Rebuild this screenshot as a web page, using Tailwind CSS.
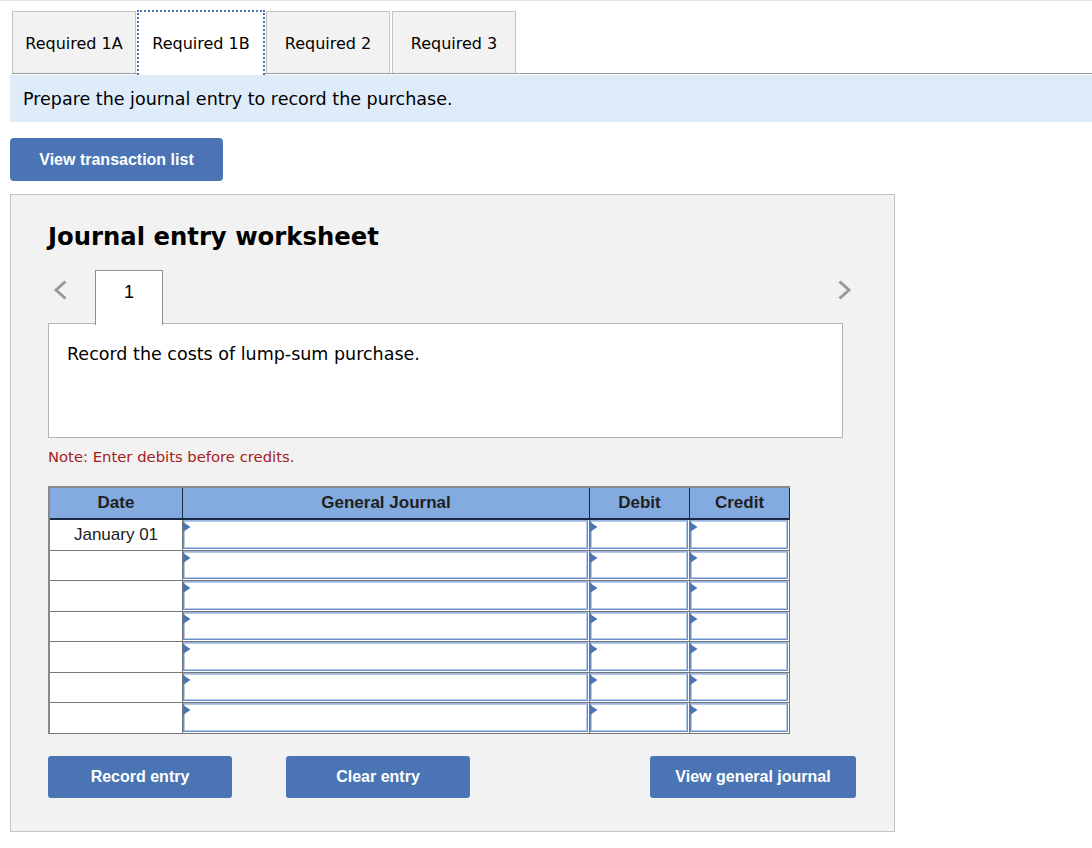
<!DOCTYPE html>
<html lang="en">
<head>
  <meta charset="UTF-8" />
  <title>Journal entry worksheet</title>
  <script src="https://cdn.jsdelivr.net/npm/@tailwindcss/browser@4"></script>
</head>
<body class="bg-white text-black font-['DejaVu_Sans',sans-serif] w-[1092px] h-[848px] overflow-hidden">
  <div class="border-t border-[#e2e2e2] h-[11px]"></div>

  <!-- tabs -->
  <div class="ml-3 flex items-end h-[62px] text-[16px]">
    <div class="w-[124px] h-[62px] bg-[#f2f2f2] border border-b-0 border-[#c4c4c4] flex items-center justify-center pt-[3px]">Required 1A</div>
    <div class="relative z-10 ml-[1px] mb-[-2px] w-[128px] h-[65px] bg-white border-2 border-b-0 border-dotted border-[#4a74b4] flex items-center justify-center">Required 1B</div>
    <div class="ml-[1px] w-[124px] h-[62px] bg-[#f2f2f2] border border-b-0 border-[#c4c4c4] flex items-center justify-center pt-[3px]">Required 2</div>
    <div class="ml-[2px] w-[124px] h-[62px] bg-[#f2f2f2] border border-b-0 border-[#c4c4c4] flex items-center justify-center pt-[3px]">Required 3</div>
  </div>
  <div class="ml-3 border-t border-[#9a9a9a] h-[1px]"></div>

  <div class="ml-[10px] mt-[1px] h-[47px] bg-[#deebf8] flex items-center pl-[13px] pt-[1px] text-[17.5px]">Prepare the journal entry to record the purchase.</div>

  <button class="block ml-[10px] mt-4 w-[213px] h-[43px] rounded-[4px] bg-[#4a74b4] text-white font-['Liberation_Sans',sans-serif] font-bold text-[16px]">View transaction list</button>

  <!-- worksheet panel -->
  <div class="ml-[10px] mt-[13px] w-[885px] h-[638px] bg-[#f2f2f2] border border-[#c4c4c4] pl-[37px]">
    <h1 class="mt-[24px] h-[36px] leading-[36px] text-[24.3px] font-bold">Journal entry worksheet</h1>

    <div class="relative mt-[15px] w-[795px] h-[53px]">
      <svg class="absolute left-[5px] top-[10px]" width="14" height="20" viewBox="0 0 14 20" fill="none"><path d="M12.5 1.5 3 10l9.5 8.5" stroke="#999" stroke-width="3"/></svg>
      <div class="absolute left-[47px] top-0 w-[68px] h-[55px] z-10 bg-white border border-b-0 border-[#8f8f8f] flex items-center justify-center pb-[12px] font-['Liberation_Sans',sans-serif] text-[18px]">1</div>
      <svg class="absolute left-[790px] top-[10px]" width="14" height="20" viewBox="0 0 14 20" fill="none"><path d="M1.5 1.5 11 10l-9.5 8.5" stroke="#999" stroke-width="3"/></svg>
    </div>

    <div class="w-[795px] h-[115px] bg-white border border-[#b5b5b5] pl-[18px] pt-[19px] text-[17.5px] leading-[22px]">Record the costs of lump-sum purchase.</div>

    <p class="mt-[9px] h-5 leading-5 text-[14.8px] text-[#a61c1c]">Note: Enter debits before credits.</p>

    <!-- journal table -->
    <div id="journal" class="mt-[19px] w-[742px] border-l-2 border-t-2 border-[#888] font-['Liberation_Sans',sans-serif]">
      <div class="grid grid-cols-[133px_407px_100px_100px] h-[32px] bg-[#84abe0] border-b-2 border-[#1b2a44] text-[#1f1f1f] font-bold text-[17px] leading-[30px] text-center">
        <div class="border-r border-[#1b2a44]">Date</div>
        <div class="border-r border-[#1b2a44]">General Journal</div>
        <div class="border-r border-[#1b2a44]">Debit</div>
        <div class="border-r border-[#1b2a44]">Credit</div>
      </div>
    </div>

    <div class="mt-[22px] relative w-[808px] h-[42px] flex font-['Liberation_Sans',sans-serif] font-bold text-[16px] text-white">
      <button class="w-[184px] rounded-[3px] bg-[#4a74b4]">Record entry</button>
      <button class="ml-[54px] w-[184px] rounded-[3px] bg-[#4a74b4]">Clear entry</button>
      <button class="ml-[180px] w-[206px] rounded-[3px] bg-[#4a74b4]">View general journal</button>
    </div>
  </div>

  <script>
    // seven rows, only the first one has a date
    const cell = `<div class="relative border-r border-[#777] pr-[1px] pb-[1px]">
      <div class="h-full bg-white border border-[#6a8fc7] border-t-[#9ab6e0] shadow-[inset_0_0_0_1px_#b4c9ea]"></div>
      <svg class="absolute left-0 top-[2px]" width="8" height="10" viewBox="0 0 8 10"><path d="M0 0 7.5 5 0 10z" fill="#4a74b4"/></svg>
    </div>`;
    const journal = document.getElementById("journal");
    for (let i = 0; i < 7; i++) {
      const date = i === 0 ? "January 01" : "";
      journal.insertAdjacentHTML("beforeend", `
        <div class="grid grid-cols-[133px_407px_100px_100px] h-[30.5px] bg-white border-b border-[#777]">
          <div class="border-r border-[#777] text-center text-[17px] leading-[29px] text-[#222]">${date}</div>
          ${cell}${cell}${cell}
        </div>`);
    }
  </script>
</body>
</html>
